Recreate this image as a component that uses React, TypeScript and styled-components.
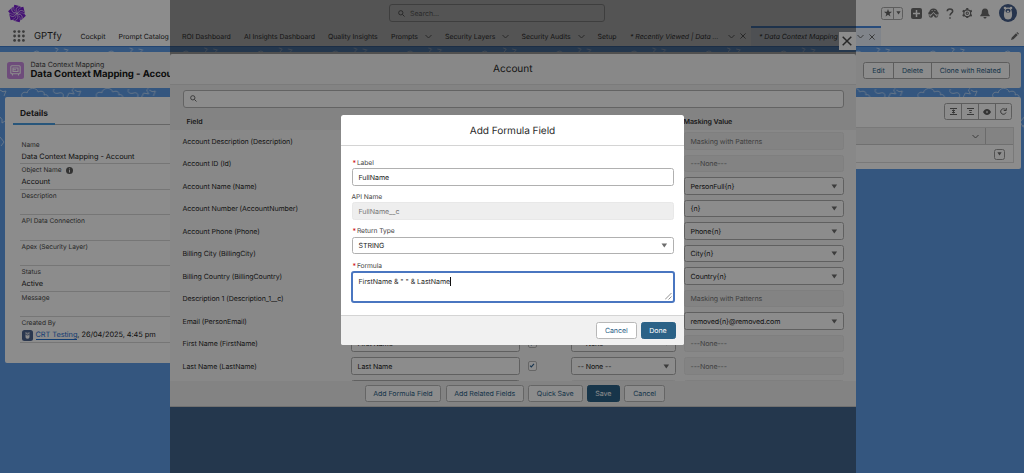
import React from "react";
import styled, { createGlobalStyle } from "styled-components";

const Global = createGlobalStyle`
  * { box-sizing: border-box; }
  body { margin: 0; overflow: hidden; font-family: Inter, "Liberation Sans", sans-serif; font-size: 7.05px; letter-spacing: -0.06px; color: #2b2b2b; text-rendering: geometricPrecision; }
`;

const Screen = styled.div`
  position: relative;
  width: 1024px;
  height: 473px;
  overflow: hidden;
  background: #5f9de8;
`;
const Page = styled.div`
  position: relative;
  height: 100%;
`;
const GlobalHeader = styled.header`
  height: 26px;
  background: #fff;
  display: flex;
  align-items: center;
  padding-left: 7px;
`;
const SearchBox = styled.div<{ $w: number; $h: number }>`
  width: ${(p) => p.$w}px;
  height: ${(p) => p.$h}px;
  flex: none;
  border: 1px solid #b4b4b4;
  border-radius: 3px;
  background: #fff;
  display: flex;
  align-items: center;
  gap: 5px;
  padding-left: 6px;
  color: #777;
`;
const GlobalSearch = styled.div`
  margin-left: 362px;
  div { padding-left: 8px; }
`;
const Tools = styled.div`
  display: flex;
  align-items: center;
  color: #6f6f6f;
  width: 143px;
  margin-left: auto;
`;
const StarGroup = styled.div`
  display: flex;
  flex: none;
  width: 22px;
  height: 13px;
  border: 1px solid #aaa;
  border-radius: 2.5px;
  margin-right: 8px;
  & > span { flex: 1; display: flex; align-items: center; justify-content: center; }
  & > span:first-child { flex: none; width: 12px; border-right: 1px solid #aaa; }
`;
const ToolIcon = styled.span<{ $w: number }>`
  width: ${(p) => p.$w}px;
  display: flex;
  justify-content: center;
  flex: none;
`;
const Nav = styled.nav`
  height: 21px;
  background: #fff;
  border-bottom: 1px solid #3f7fd0;
  display: flex;
  align-items: stretch;
`;
const NavItem = styled.div<{ $w: number; $pad?: number; $active?: boolean; $italic?: boolean }>`
  width: ${(p) => p.$w}px;
  flex: none;
  display: flex;
  align-items: center;
  padding-left: ${(p) => p.$pad ?? 0}px;
  white-space: nowrap;
  font-size: 6.98px;
  font-style: ${(p) => (p.$italic ? "italic" : "normal")};
  background: ${(p) => (p.$active ? "#e9f1fb" : "transparent")};
  border-top: ${(p) => (p.$active ? "2px solid #4a8be0" : "none")};
  padding-bottom: ${(p) => (p.$active ? 1 : 0)}px;
  svg { margin-left: auto; }
`;
const Launcher = styled.div`
  width: 34px;
  padding-left: 13px;
  display: flex;
  align-items: center;
`;
const AppName = styled.div`
  width: 46.5px;
  font-size: 9.5px;
  display: flex;
  align-items: center;
`;
const Pencil = styled.div`
  margin-left: auto;
  padding-right: 5.5px;
  display: flex;
  align-items: center;
`;
const Waves = styled.svg`
  position: absolute;
  left: 0;
  top: 47px;
`;
const Content = styled.main`
  position: relative;
  padding: 5px 3px 0 0;
`;
const RecordHeader = styled.section`
  height: 36px;
  background: #f3f3f3;
  border-radius: 0 2px 2px 0;
  display: flex;
  align-items: center;
  padding: 0 11.5px 0 7px;
`;
const RecordIcon = styled.div`
  width: 17px;
  height: 17px;
  border-radius: 2.5px;
  background: #c98be0;
  display: flex;
  align-items: center;
  justify-content: center;
  margin-right: 6.5px;
`;
const RecordTitle = styled.div`
  flex: 1;
  line-height: 9.4px;
  margin-top: -1px;
  small { display: block; font-size: 7.1px; color: #444; }
  b { font-size: 9.6px; color: #181818; white-space: nowrap; }
`;
const ButtonGroup = styled.div`
  display: flex;
  border: 1px solid #aaa;
  border-radius: 2.5px;
  background: #fff;
`;
const GroupCell = styled.div<{ $w: number }>`
  width: ${(p) => p.$w}px;
  height: 15px;
  display: flex;
  align-items: center;
  justify-content: center;
  color: #2b6287;
  & + & { border-left: 1px solid #aaa; }
`;
const Columns = styled.div`
  display: flex;
  align-items: flex-start;
  justify-content: space-between;
  padding: 9px 0 0 4.5px;
`;
const DetailCard = styled.section`
  width: 400px;
  height: 266px;
  background: #fff;
  border-radius: 2px;
  padding: 8px 8.5px;
`;
const TabBar = styled.div`
  height: 20px;
  border-bottom: 1px solid #bbb;
  display: flex;
`;
const Tab = styled.div`
  width: 42px;
  height: 20px;
  text-align: center;
  line-height: 19px;
  font-size: 8.4px;
  font-weight: 700;
  border-bottom: 2px solid #4a9de0;
`;
const Fields = styled.div`
  padding: 13.5px 6.5px 0;
`;
const FieldItem = styled.div`
  height: 25.5px;
  border-bottom: 1px solid #d8d8d8;
  padding: 2px 2px 0;
  line-height: 8px;
`;
const FieldName = styled.div`
  font-size: 6.6px;
  color: #4c4c4c;
  display: flex;
  align-items: center;
  height: 8px;
  gap: 5px;
`;
const FieldValue = styled.div`
  font-size: 7.4px;
  color: #1c1c1c;
  margin-top: 4px;
  display: flex;
  align-items: center;
  height: 8px;
  white-space: pre;
  a { color: #1f6fd0; border-bottom: 0.6px solid #1f6fd0; }
`;
const UserBadge = styled.span`
  width: 11px;
  height: 11px;
  border-radius: 2.5px;
  background: #4f6690;
  display: flex;
  align-items: center;
  justify-content: center;
  margin-right: 3px;
`;
const SideCard = styled.section`
  width: 300px;
  height: 72px;
  background: #fff;
  border-radius: 2px;
  padding: 6px 7px;
`;
const IconBar = styled.div`
  display: flex;
  justify-content: flex-end;
  padding-right: 2px;
  ${GroupCell} { color: #666; }
`;
const SideTable = styled.div`
  margin-top: 7px;
  border: 1px solid #ddd;
  height: 36px;
`;
const SideHead = styled.div`
  height: 17px;
  background: #eee;
  border-bottom: 1px solid #ccc;
  display: flex;
  justify-content: flex-end;
`;
const SideHeadCell = styled.div<{ $w: number }>`
  width: ${(p) => p.$w}px;
  border-right: 1px solid #c4c4c4;
  display: flex;
  align-items: center;
  justify-content: flex-end;
  padding-right: 6px;
  &:last-child { border: 0; }
`;
const SideRow = styled.div`
  height: 18px;
  display: flex;
  align-items: center;
  justify-content: flex-end;
  padding-right: 8px;
`;
const TinyButton = styled.span`
  width: 11px;
  height: 11px;
  border: 1px solid #999;
  border-radius: 2.5px;
  display: flex;
  align-items: center;
  justify-content: center;
`;

const ColumnOverlay = styled.div`
  position: absolute;
  left: 169.5px;
  top: 0;
  width: 686.5px;
  height: 473px;
  background: rgba(34, 34, 34, 0.46);
  padding-top: 53.5px;
`;
const CloseButton = styled.div`
  position: absolute;
  right: 0;
  top: 32px;
  width: 17.5px;
  height: 17.5px;
  background: #fff;
  display: flex;
  align-items: center;
  justify-content: center;
`;
const Panel = styled.section`
  height: 353px;
  background: #f8f8f8;
  display: flex;
  flex-direction: column;
  overflow: hidden;
  border-radius: 2px 2px 0 0;
`;
const PanelHeader = styled.h2`
  margin: 0;
  height: 31px;
  flex: none;
  border-bottom: 1.5px solid #e0e0e0;
  text-align: center;
  font-weight: 400;
  font-size: 10.1px;
  line-height: 31px;
`;
const PanelTop = styled.div`
  height: 45px;
  flex: none;
  background: #efefef;
  padding: 5.5px 0 0 13px;
`;
const Grid = styled.div`
  display: grid;
  grid-template-columns: 168px 169px 8px 43px 105px 8px 160px;
  align-items: center;
  height: 22.53px;
  flex: none;
  padding-left: 13px;
  white-space: nowrap;
  letter-spacing: -0.09px;
  & > span { padding-top: 1px; }
`;
const HeadGrid = styled(Grid)`
  padding-left: 4px;
  height: 27px;
  font-weight: 600;
  color: #333;
  & > span { padding-top: 0; }
  & > :last-child { grid-column: 7; margin-left: -4px; }
`;
const Rows = styled.div`
  flex: 1;
  overflow: hidden;
`;
const Control = styled.div<{ $disabled?: boolean }>`
  height: 17.5px;
  border: 1px solid ${(p) => (p.$disabled ? "#e8e8e8" : "#b0b0b0")};
  border-radius: 2.5px;
  background: ${(p) => (p.$disabled ? "#eeeeee" : "#fff")};
  color: ${(p) => (p.$disabled ? "#777" : "#222")};
  display: flex;
  align-items: center;
  justify-content: space-between;
  padding: 0.5px 5px 0 6px;
`;
const Check = styled.div`
  width: 9.5px;
  height: 9.5px;
  border: 1px solid #bbb;
  border-radius: 2px;
  background: #fff;
  display: flex;
  align-items: center;
  justify-content: center;
`;
const PanelFooter = styled.footer`
  height: 25.5px;
  flex: none;
  background: #efefef;
  border-bottom: 1px solid #ccc;
  display: flex;
  justify-content: center;
  padding: 4px 0 0 4px;
  gap: 4.4px;
`;
const Button = styled.button<{ $w: number; $brand?: boolean }>`
  width: ${(p) => p.$w}px;
  height: 17px;
  flex: none;
  padding: 0;
  border: 1px solid ${(p) => (p.$brand ? "#2b6287" : "#b8b8b8")};
  border-radius: 2.5px;
  background: ${(p) => (p.$brand ? "#2b6287" : "#fff")};
  color: ${(p) => (p.$brand ? "#fff" : "#2b6287")};
  font: 400 7.05px Inter, sans-serif;
  letter-spacing: -0.06px;
  text-rendering: geometricPrecision;
  white-space: nowrap;
`;

const Scrim = styled.div`
  position: absolute;
  inset: 0;
  background: rgba(0, 0, 0, 0.45);
  padding: 115px 340px 0 341px;
`;
const Dialog = styled.section`
  height: 230px;
  background: #fff;
  border-radius: 2.5px;
  overflow: hidden;
  display: flex;
  flex-direction: column;
`;
const DialogTitle = styled.h2`
  margin: 0;
  height: 31px;
  flex: none;
  border-bottom: 1px solid #d4d4d4;
  text-align: center;
  font-size: 10.1px;
  font-weight: 400;
  line-height: 32px;
`;
const DialogBody = styled.div`
  flex: 1;
  padding: 10.5px 10.5px 0;
`;
const FormRow = styled.div`
  height: 34.3px;
`;
const FormLabel = styled.label`
  height: 11.5px;
  display: flex;
  align-items: center;
  font-size: 6.7px;
  color: #444;
  padding-top: 0.8px;
`;
const Star = styled.span`
  color: #d0201c;
  font-weight: 600;
  width: 4.4px;
  margin-left: 1px;
`;
const TextArea = styled.div`
  height: 32px;
  margin: 0 -1px;
  border: 2px solid #4a76c0;
  border-radius: 3px;
  padding: 4.5px 6px;
  line-height: 9px;
  display: flex;
  align-items: flex-start;
  justify-content: space-between;
  svg { align-self: flex-end; margin: 0 -5.5px -4px 0; }
`;
const Caret = styled.span`
  border-right: 1px solid #111;
`;
const DialogFooter = styled.footer`
  height: 30.5px;
  flex: none;
  background: #f1f1f1;
  border-top: 1px solid #d4d4d4;
  display: flex;
  justify-content: flex-end;
  padding: 6px 8.5px 0 0;
  gap: 4px;
`;

const Magnifier = ({ s = 7 }: { s?: number }) => (
  <svg width={s} height={s} viewBox="0 0 14 14" fill="none" stroke="#666" strokeWidth="1.9">
    <circle cx="5.6" cy="5.6" r="4.3" />
    <path d="M8.8 8.8 13 13" />
  </svg>
);
const Chevron = ({ mr = 0 }: { mr?: number }) => (
  <svg width="7" height="5" viewBox="0 0 14 10" fill="none" stroke="#6d6d6d" strokeWidth="2" style={{ marginRight: mr }}>
    <path d="M1 2l6 6 6-6" />
  </svg>
);
const Cross = ({ s, mr = 0, color = "#5e5e5e" }: { s: number; mr?: number; color?: string }) => (
  <svg width={s} height={s} viewBox="0 0 10 10" stroke={color} strokeWidth="1.5" style={{ marginRight: mr, marginLeft: mr ? 5.5 : 0 }}>
    <path d="M.7.7l8.6 8.6M9.3.7.7 9.3" />
  </svg>
);
const Caretdown = ({ w = 6.6 }: { w?: number }) => (
  <svg width={w} height={w * 0.75} viewBox="0 0 8 6" fill="#6d6d6d">
    <path d="M.6.5h6.8L4 5.6z" />
  </svg>
);
const Logo = () => (
  <svg width="20" height="19" viewBox="-10 -9.5 20 19">
    {[0, 60, 120, 180, 240, 300].map((a) => (
      <path key={a} d="M0 0L-4.300-3.600-2.600-8.800 3.200-7.200 5-3z" fill="#7a1fd2" transform={`rotate(${a})`} />
    ))}
    {[0, 60, 120, 180, 240, 300].map((a) => (
      <g key={a} transform={`rotate(${a})`} fill="none" stroke="#e9d9fa">
        <path d="M.3-1.500C-1.800-3.500-1-6.300 2.600-7.200" strokeWidth=".75" />
        <path d="M1.200-2C.8-3.800 2-5.400 4.200-5.800" strokeWidth=".45" />
      </g>
    ))}
    <circle r="1.200" fill="#e9d9fa" />
  </svg>
);
const Bear = ({ s, bg }: { s: number; bg?: boolean }) => (
  <svg width={s} height={s} viewBox="0 0 18 18">
    {bg && <circle cx="9" cy="9" r="9" fill="#465f8c" />}
    <circle cx="6" cy="4" r="1.300" fill="#fff" />
    <circle cx="12" cy="4" r="1.300" fill="#fff" />
    <path d="M9 3.400c3 0 3.400 2 3.900 5.200.5 3.600 0 7-3.900 7s-4.400-3.400-3.900-7C5.600 5.400 6 3.400 9 3.400z" fill="#fff" />
    <ellipse cx="9" cy="6.800" rx="2.600" ry="2" fill="#465f8c" />
    <ellipse cx="9" cy="7.400" rx="1.200" ry=".9" fill="#fff" />
  </svg>
);

const rows: { name: string; label: string; mask: string; off?: boolean }[] = [
  { name: "Account Description (Description)", label: "Account Description", mask: "Masking with Patterns", off: true },
  { name: "Account ID (Id)", label: "Account ID", mask: "---None---", off: true },
  { name: "Account Name (Name)", label: "Account Name", mask: "PersonFull{n}" },
  { name: "Account Number (AccountNumber)", label: "Account Number", mask: "{n}" },
  { name: "Account Phone (Phone)", label: "Account Phone", mask: "Phone{n}" },
  { name: "Billing City (BillingCity)", label: "Billing City", mask: "City{n}" },
  { name: "Billing Country (BillingCountry)", label: "Billing Country", mask: "Country{n}" },
  { name: "Description 1 (Description_1__c)", label: "Description 1", mask: "Masking with Patterns", off: true },
  { name: "Email (PersonEmail)", label: "Email", mask: "removed{n}@removed.com" },
  { name: "First Name (FirstName)", label: "First Name", mask: "---None---", off: true },
  { name: "Last Name (LastName)", label: "Last Name", mask: "---None---", off: true },
  { name: "", label: "", mask: "", off: true },
];
const coveredRows = 9;

const details: [string, string][] = [
  ["Name", "Data Context Mapping - Account"],
  ["Object Name", "Account"],
  ["Description", ""],
  ["API Data Connection", ""],
  ["Apex (Security Layer)", ""],
  ["Status", "Active"],
  ["Message", ""],
];

export default function App() {
  return (
    <Screen>
      <Global />
      <Page>
        <Waves width="1024" height="115">
          <defs>
            <pattern id="waves" width="74.700" height="115" patternUnits="userSpaceOnUse">
              <g fill="none" stroke="#c3dbf8" strokeWidth="0.9">
                <path d="M55 1l3 1-2 3M64 2l4 1-2 2 3 1M34 5q3-2 5 0" />
                <path d="M0 43q3 3 6 1l-2 5M22 50c-2-4 3-6 5-4 1-6 10-6 11-1 4-2 7 0 6 3 2-1 4 0 4 2M54 42c-2 4 2 5 5 4s5 1 4 4M67 50l2-4 5 1-2-4 2-2" />
                <path d="M0 70q3 2 2 6l3-2M0 90l4 5-3 4M53 70l-4 5 3 5M52 78l2 5" />
              </g>
            </pattern>
          </defs>
          <rect width="1024" height="115" fill="url(#waves)" />
        </Waves>
        <GlobalHeader>
          <Logo />
          <GlobalSearch>
            <SearchBox $w={215.500} $h={17.500}>
              <Magnifier />
              Search...
            </SearchBox>
          </GlobalSearch>
          <Tools>
            <StarGroup>
              <span>
                <svg width="8" height="8" viewBox="0 0 20 20" fill="#666"><path d="M10 0l2.600 7H20l-6 4.600L16.200 19 10 14.600 3.800 19 6 11.600 0 7h7.400z" /></svg>
              </span>
              <span><Caretdown w={5} /></span>
            </StarGroup>
            <ToolIcon $w={11}>
              <svg width="11" height="11" viewBox="0 0 11 11"><rect width="11" height="11" rx="2" fill="#6d6d6d" /><path d="M5.500 2v7M2 5.500h7" stroke="#fff" strokeWidth="1.500" /></svg>
            </ToolIcon>
            <ToolIcon $w={22}>
              <svg width="11" height="10" viewBox="0 0 22 20" fill="#6d6d6d">
                <path d="M11 1c5 0 8 3 8 6 2 1 3 4 2 6h-5l-5-5-5 5H1c-1-2 0-5 2-6 0-3 3-6 8-6z" />
                <path d="M11 10l8 9h-5l-3-4-3 4H3zM1 15h4l-2 3zM21 15h-4l2 3z" />
                <path d="M7 5h2.500M12.500 5H15" stroke="#fff" strokeWidth="1.500" />
              </svg>
            </ToolIcon>
            <ToolIcon $w={12}>
              <svg width="8" height="11" viewBox="0 0 8 11" fill="none" stroke="#6d6d6d" strokeWidth="1.500"><path d="M1.200 3.200C1.200.2 6.700.2 6.700 3.200 6.700 5 4 5.300 4 7.600M4 9.200v1.500" /></svg>
            </ToolIcon>
            <ToolIcon $w={22}>
              <svg width="10.500" height="10.500" viewBox="-10 -10 20 20" fill="none" stroke="#6d6d6d">
                <circle r="6.500" strokeWidth="2.200" />
                <circle r="2.200" strokeWidth="2" />
                {[0, 60, 120, 180, 240, 300].map((a) => (
                  <path key={a} d="M0-6.500V-10" strokeWidth="4" transform={`rotate(${a})`} />
                ))}
              </svg>
            </ToolIcon>
            <ToolIcon $w={13}>
              <svg width="10" height="11" viewBox="0 0 20 22" fill="#6d6d6d"><path d="M10 1c5 0 6.500 3.500 6.500 8 0 3 1.500 4 3 6v1.500H.5V15c1.500-2 3-3 3-6 0-4.500 1.500-8 6.500-8zM7 18h6c0 4-6 4-6 0z" /></svg>
            </ToolIcon>
            <ToolIcon $w={33}><Bear s={18} bg /></ToolIcon>
          </Tools>
        </GlobalHeader>
        <Nav>
          <Launcher>
            <svg width="12" height="12" viewBox="0 0 12 12" fill="#6d6d6d">
              {[0, 1, 2].flatMap((r) => [0, 1, 2].map((c) => <circle key={`${r}${c}`} cx={1.600 + c * 4.400} cy={1.600 + r * 4.400} r="1.400" />))}
            </svg>
          </Launcher>
          <AppName>GPTfy</AppName>
          <NavItem $w={38}>Cockpit</NavItem>
          <NavItem $w={63.500}>Prompt Catalog</NavItem>
          <NavItem $w={62}>ROI Dashboard</NavItem>
          <NavItem $w={84}>AI Insights Dashboard</NavItem>
          <NavItem $w={63}>Quality Insights</NavItem>
          <NavItem $w={54}>Prompts<Chevron mr={13} /></NavItem>
          <NavItem $w={76.500}>Security Layers<Chevron mr={13} /></NavItem>
          <NavItem $w={76}>Security Audits<Chevron mr={13} /></NavItem>
          <NavItem $w={32.500}>Setup</NavItem>
          <NavItem $w={121} $italic>* Recently Viewed | Data ...<Chevron /><Cross s={6} mr={5} /></NavItem>
          <NavItem $w={130} $pad={8} $italic $active>* Data Context Mapping<Chevron /><Cross s={6} mr={6} /></NavItem>
          <Pencil>
            <svg width="8" height="8" viewBox="0 0 16 16" fill="#6d6d6d"><path d="M0 16l1.500-5L10 2.500 13.500 6 5 14.500zM11 1.500 12.500 0 16 3.500 14.500 5z" /></svg>
          </Pencil>
        </Nav>
        <Content>
          <RecordHeader>
            <RecordIcon>
              <svg width="11" height="11" viewBox="0 0 11 11" fill="none" stroke="#fff" strokeWidth="1.100"><rect x=".8" y=".8" width="9.400" height="8" rx="1" /><path d="M3 3h5v3.500H3zM3 4.800h3M2.500 9v1.500M8.500 9v1.500" /></svg>
            </RecordIcon>
            <RecordTitle>
              <small>Data Context Mapping</small>
              <b>Data Context Mapping - Account</b>
            </RecordTitle>
            <ButtonGroup>
              <GroupCell $w={29}>Edit</GroupCell>
              <GroupCell $w={38}>Delete</GroupCell>
              <GroupCell $w={77.500}>Clone with Related</GroupCell>
            </ButtonGroup>
          </RecordHeader>
          <Columns>
            <DetailCard>
              <TabBar><Tab>Details</Tab></TabBar>
              <Fields>
                {details.map(([n, v]) => (
                  <FieldItem key={n}>
                    <FieldName>
                      {n}
                      {n === "Object Name" && (
                        <svg width="7" height="7" viewBox="0 0 7 7"><circle cx="3.500" cy="3.500" r="3.500" fill="#5d5d5d" /><path d="M3.500 1.400v1M3.500 3v2.500" stroke="#fff" strokeWidth=".9" /></svg>
                      )}
                    </FieldName>
                    <FieldValue>{v}</FieldValue>
                  </FieldItem>
                ))}
                <FieldItem>
                  <FieldName>Created By</FieldName>
                  <FieldValue><UserBadge><Bear s={9} /></UserBadge><a>CRT Testing</a>, 26/04/2025, 4:45 pm</FieldValue>
                </FieldItem>
              </Fields>
            </DetailCard>
            <SideCard>
              <IconBar>
                <ButtonGroup>
                  <GroupCell $w={16}><svg width="7" height="7" viewBox="0 0 7 7" stroke="#666" fill="none"><path d="M0 .5h7M0 6.500h7M3.500 1.500v4M2 2.500h3M2 4.500h3" /></svg></GroupCell>
                  <GroupCell $w={17}><svg width="7" height="7" viewBox="0 0 7 7" stroke="#666" fill="none"><path d="M0 .5h7M0 6.500h7M2 2.500h3M2.500 4.500h2" /></svg></GroupCell>
                  <GroupCell $w={17}><svg width="8" height="6" viewBox="0 0 8 6"><path d="M0 3c2-4 6-4 8 0-2 4-6 4-8 0z" fill="#5d5d5d" /><circle cx="4" cy="3" r="1.200" fill="#bbb" /></svg></GroupCell>
                  <GroupCell $w={16}><svg width="7" height="7" viewBox="0 0 14 14" stroke="#666" strokeWidth="2" fill="none"><path d="M12 9A5.500 5.500 0 1 1 11 3.500M12.500 0v5h-5" /></svg></GroupCell>
                </ButtonGroup>
              </IconBar>
              <SideTable>
                <SideHead>
                  <SideHeadCell $w={100}><Chevron /></SideHeadCell>
                  <SideHeadCell $w={27} />
                </SideHead>
                <SideRow><TinyButton><Caretdown w={5} /></TinyButton></SideRow>
              </SideTable>
            </SideCard>
          </Columns>
        </Content>
      </Page>

      <ColumnOverlay>
        <CloseButton><Cross s={10} color="#4a4a4a" /></CloseButton>
        <Panel>
          <PanelHeader>Account</PanelHeader>
          <PanelTop>
            <SearchBox $w={661} $h={17.500}><Magnifier /></SearchBox>
            <HeadGrid><span>Field</span><span>Masking Value</span></HeadGrid>
          </PanelTop>
          <Rows>
            {rows.map((r, i) => (
              <Grid key={r.label}>
                <span>{r.name}</span>
                <Control>{i >= coveredRows && r.label}</Control>
                <span />
                <Check><svg width="6" height="5" viewBox="0 0 6 5" fill="none" stroke="#2b5f8f" strokeWidth="1.100"><path d="M1 2.600l1.300 1.300L5 .9" /></svg></Check>
                <Control $disabled={!r.name}>{i >= coveredRows && r.name && "-- None --"}{r.name && <Caretdown />}</Control>
                <span />
                <Control $disabled={r.off}>{r.mask}{!r.off && <Caretdown />}</Control>
              </Grid>
            ))}
          </Rows>
          <PanelFooter>
            <Button $w={76.500}>Add Formula Field</Button>
            <Button $w={78}>Add Related Fields</Button>
            <Button $w={54.500}>Quick Save</Button>
            <Button $w={33} $brand>Save</Button>
            <Button $w={40.500}>Cancel</Button>
          </PanelFooter>
        </Panel>
      </ColumnOverlay>

      <Scrim>
        <Dialog>
          <DialogTitle>Add Formula Field</DialogTitle>
          <DialogBody>
            <FormRow>
              <FormLabel><Star>*</Star>Label</FormLabel>
              <Control>FullName</Control>
            </FormRow>
            <FormRow>
              <FormLabel>API Name</FormLabel>
              <Control $disabled>FullName__c</Control>
            </FormRow>
            <FormRow>
              <FormLabel><Star>*</Star>Return Type</FormLabel>
              <Control>STRING<Caretdown /></Control>
            </FormRow>
            <FormLabel><Star>*</Star>Formula</FormLabel>
            <TextArea>
              <Caret>FirstName &amp; " " &amp; LastName</Caret>
              <svg width="7" height="7" viewBox="0 0 7 7" stroke="#777" strokeWidth=".8"><path d="M0 6.500 6.500 0M3.500 6.500l3-3" /></svg>
            </TextArea>
          </DialogBody>
          <DialogFooter>
            <Button $w={40.500}>Cancel</Button>
            <Button $w={35} $brand>Done</Button>
          </DialogFooter>
        </Dialog>
      </Scrim>
    </Screen>
  );
}
